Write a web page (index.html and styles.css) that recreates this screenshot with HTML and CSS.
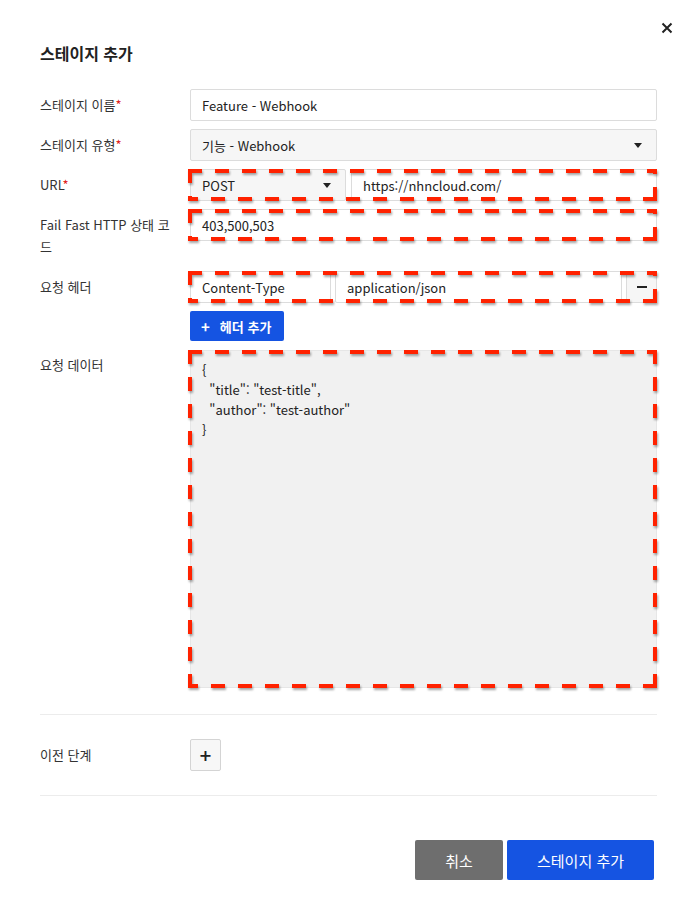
FILE: index.html
```html
<!DOCTYPE html>
<html lang="ko">
<head>
<meta charset="utf-8">
<title>스테이지 추가</title>
<link rel="stylesheet" href="styles.css">
</head>
<body>
<div class="dialog">
  <div class="topbar">
    <button class="close" aria-label="닫기">
      <svg width="12" height="12" viewBox="0 0 12 12"><path d="M1.5 1.5 L10.5 10.5 M10.5 1.5 L1.5 10.5" stroke="#222" stroke-width="2" fill="none"/></svg>
    </button>
  </div>
  <h1 class="title">스테이지 추가</h1>

  <div class="form">
    <div class="row">
      <div class="label">스테이지 이름<span class="req">*</span></div>
      <div class="field"><div class="input">Feature - Webhook</div></div>
    </div>
    <div class="row">
      <div class="label">스테이지 유형<span class="req">*</span></div>
      <div class="field"><div class="input select">기능 - Webhook<span class="caret"></span></div></div>
    </div>
    <div class="row">
      <div class="label">URL<span class="req">*</span></div>
      <div class="field marked">
        <div class="pair">
          <div class="input select method">POST<span class="caret"></span></div>
          <div class="input grow">https://nhncloud.com/</div>
        </div>
      </div>
    </div>
    <div class="row">
      <div class="label">Fail Fast HTTP 상태 코드</div>
      <div class="field"><div class="marked"><div class="input">403,500,503</div></div></div>
    </div>
    <div class="row">
      <div class="label">요청 헤더</div>
      <div class="field stack">
        <div class="marked">
          <div class="pair tight">
            <div class="input key">Content-Type</div>
            <div class="input grow">application/json</div>
            <div class="input minus"><span class="bar"></span></div>
          </div>
        </div>
        <button class="btn-add"><span class="plus">+</span>헤더 추가</button>
      </div>
    </div>
    <div class="row">
      <div class="label">요청 데이터</div>
      <div class="field"><div class="marked"><div class="textarea">{
  "title": "test-title",
  "author": "test-author"
}</div></div></div>
    </div>
  </div>

  <div class="section">
    <div class="row center">
      <div class="label">이전 단계</div>
      <div class="field"><button class="btn-plus">+</button></div>
    </div>
  </div>

  <div class="footer">
    <button class="btn cancel">취소</button>
    <button class="btn primary">스테이지 추가</button>
  </div>
</div>
</body>
</html>
```

FILE: styles.css
```css
* { box-sizing: border-box; }
body {
  margin: 0;
  background: #fff;
  font-family: "Noto Sans CJK KR", "Noto Sans", sans-serif;
  color: #333;
  font-size: 13px;
}
.dialog {
  width: 697px;
  padding: 0 40px;
}
.topbar {
  display: flex;
  justify-content: flex-end;
  height: 41px;
  padding-top: 22px;
  margin-right: -16px;
}
.close {
  border: 0;
  background: none;
  padding: 0;
  width: 12px;
  height: 12px;
  display: flex;
}
.title {
  margin: 0;
  font-size: 16px;
  font-weight: 700;
  line-height: 24px;
  color: #222;
}
.form { margin-top: 24px; }
.row {
  display: grid;
  grid-template-columns: 150px 1fr;
  margin-bottom: 8px;
}
.label {
  padding: 5px 12px 5px 0;
  line-height: 22px;
  color: #333;
}
.req { color: #e0241b; }
.field { min-width: 0; }
.input {
  height: 32px;
  border: 1px solid #dcdcdc;
  border-radius: 2px;
  background: #fff;
  padding: 0 11px;
  display: flex;
  align-items: center;
  color: #222;
  line-height: 1;
}
.select {
  background: #f6f6f6;
  justify-content: space-between;
  padding-right: 14px;
}
.caret {
  width: 0; height: 0;
  border-left: 4px solid transparent;
  border-right: 4px solid transparent;
  border-top: 5px solid #222;
}
.pair { display: flex; gap: 5px; }
.pair.tight { gap: 4px; }
.method { width: 156px; }
.grow { flex: 1; }
.key { width: 141px; }
.minus {
  width: 31px;
  background: #f6f6f6;
  justify-content: center;
  padding: 0;
}
.bar { width: 10px; height: 2px; background: #222; }
.stack { display: flex; flex-direction: column; gap: 8px; align-items: flex-start; }
.stack > .marked { align-self: stretch; }
.btn-add {
  height: 30px;
  width: 94px;
  border: 0;
  border-radius: 2px;
  background: #1554e2;
  color: #fff;
  font-family: inherit;
  font-size: 13px;
  font-weight: 700;
  display: flex;
  align-items: center;
  padding: 0 0 0 11px;
}
.plus { font-size: 15px; margin-right: 10px; font-weight: 700; }
.textarea {
  height: 338px;
  margin-top: 1px;
  background: #f1f1f1;
  border: 1px solid #e6e6e6;
  border-radius: 2px;
  padding: 9px 11px;
  line-height: 20px;
  white-space: pre;
  color: #222;
}
.marked { position: relative; }
.marked::after {
  content: "";
  position: absolute;
  top: 0; bottom: 0; left: -2px; right: 0;
  background:
    repeating-linear-gradient(90deg, #ff2200 0 14px, transparent 14px 27px) left top / 100% 4px no-repeat,
    repeating-linear-gradient(270deg, #ff2200 0 14px, transparent 14px 27px) left bottom / 100% 4px no-repeat,
    repeating-linear-gradient(180deg, #ff2200 0 14px, transparent 14px 27px) left top / 4px 100% no-repeat,
    repeating-linear-gradient(0deg, #ff2200 0 14px, transparent 14px 27px) right bottom / 4px 100% no-repeat;
  filter: drop-shadow(1px 2px 1px rgba(0,0,0,0.35));
  pointer-events: none;
}
.section {
  margin-top: 26px;
  border-top: 1px solid #ececec;
  border-bottom: 1px solid #ececec;
  padding: 24px 0 24px;
}
.section .row { margin-bottom: 0; align-items: center; }
.btn-plus {
  width: 31px;
  height: 32px;
  border: 1px solid #d4d4d4;
  border-radius: 2px;
  background: #f7f7f7;
  font-size: 16px;
  font-weight: 700;
  color: #222;
  padding: 0;
  font-family: "DejaVu Sans", sans-serif;
}
.footer {
  display: flex;
  justify-content: flex-end;
  gap: 4px;
  margin-top: 44px;
  padding-right: 3px;
}
.btn {
  height: 40px;
  border: 0;
  border-radius: 2px;
  color: #fff;
  font-family: inherit;
  font-size: 15px;
}
.cancel { width: 88px; background: #6e6e6e; }
.primary { width: 147px; background: #1554e2; }
```
